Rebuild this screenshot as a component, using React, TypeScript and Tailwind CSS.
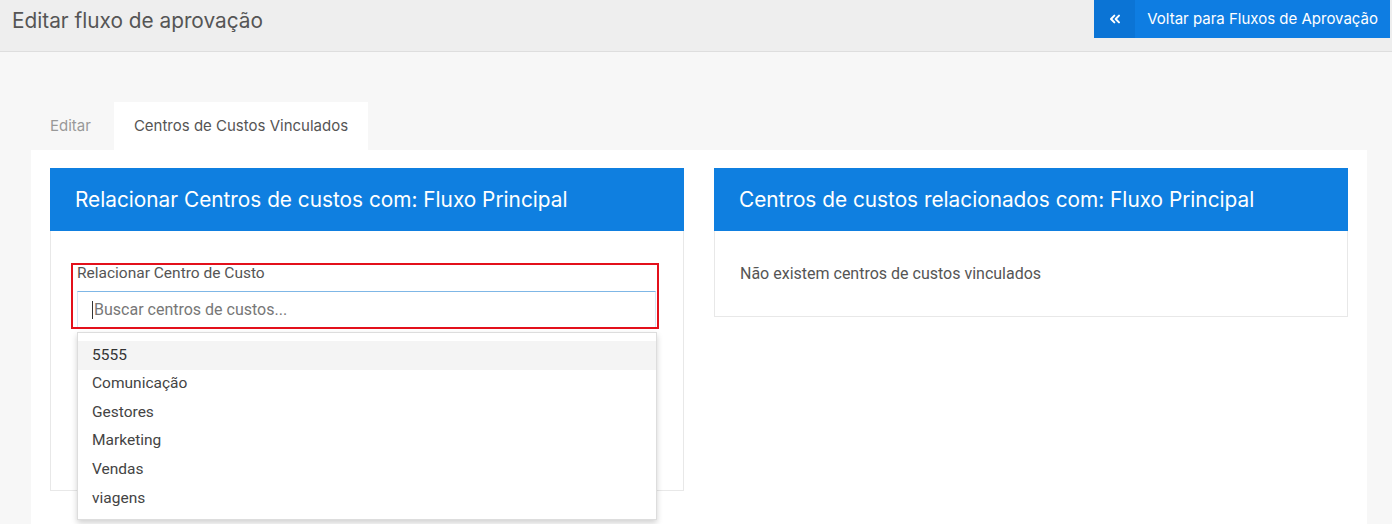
import { ChevronsLeft } from 'lucide-react';

const centros = ['5555', 'Comunicação', 'Gestores', 'Marketing', 'Vendas', 'viagens'];

export default function App() {
  return (
    <div className="min-h-[524px] w-[1392px] bg-[#f7f7f7] font-['Inter',sans-serif] text-[#555]">
      {/* Top bar */}
      <div className="flex h-[52px] items-start justify-between border-b border-[#dedede] bg-[#eeeeee]">
        <h1 className="pl-3 pt-[5px] text-[20.8px] font-normal text-[#555]">Editar fluxo de aprovação</h1>
        <button className="mr-[2px] flex h-[38px] items-stretch bg-[#0e7de2] text-[15px] text-white">
          <span className="flex w-[41px] items-center justify-center bg-[#0b74d5]">
            <ChevronsLeft className="h-4 w-4" strokeWidth={3} />
          </span>
          <span className="flex items-center pl-3 pr-[12px]">Voltar para Fluxos de Aprovação</span>
        </button>
      </div>

      {/* Tabs */}
      <div className="mt-[50px] flex pl-[31px] text-[15px]">
        <div className="flex h-[48px] items-center pl-[19px] pr-[23px] text-[#999]">Editar</div>
        <div className="flex h-[48px] items-center bg-white px-[20px] text-[#555]">Centros de Custos Vinculados</div>
      </div>

      <div className="flex w-[1366px] pl-[31px]">
        <div className="flex flex-1 items-start gap-[30px] bg-white px-[19px] pb-[40px] pt-[18px]">
          {/* Left panel */}
          <div className="w-[634px]">
            <div className="flex h-[63px] items-center bg-[#0f7fe0] pl-[25px] text-[20.8px] text-white">
              Relacionar Centros de custos com: Fluxo Principal
            </div>
            <div className="relative h-[260px] border border-t-0 border-[#e8e8e8] pl-[20px] pt-[32px]">
              <div className="w-[588px] border-2 border-[#e3101b] pl-[4px] pr-[1px] font-['Roboto',sans-serif]">
                <div className="h-[26px] text-[15.5px] leading-[17px] text-[#555]">Relacionar Centro de Custo</div>
                <div className="flex h-[36px] items-center border-x border-t border-x-[#d6e6f5] border-t-[#7fb7e6] pl-[14px] text-[16px] text-[#777]">
                  <span className="mr-[1px] h-[18px] w-px bg-[#333]" />
                  Buscar centros de custos...
                </div>
              </div>
              {/* Dropdown */}
              <div className="absolute left-[26px] top-[101px] z-10 w-[580px] border border-[#ddd] bg-white pb-[6px] pt-[8px] font-['Roboto',sans-serif] text-[15.5px] text-[#444] shadow-[0_3px_6px_rgba(0,0,0,0.18)]">
                {centros.map((c, i) => (
                  <div
                    key={c}
                    className={`flex h-[28.6px] items-center pl-[14px] ${i === 0 ? 'bg-[#f4f4f4] text-[#333]' : ''}`}
                  >
                    {c}
                  </div>
                ))}
              </div>
            </div>
          </div>

          {/* Right panel */}
          <div className="w-[634px]">
            <div className="flex h-[63px] items-center bg-[#0f7fe0] pl-[25px] text-[20.8px] text-white">
              Centros de custos relacionados com: Fluxo Principal
            </div>
            <div className="flex h-[86px] items-center border border-t-0 border-[#e8e8e8] pl-[25px] font-['Roboto',sans-serif] text-[16px] text-[#555]">
              Não existem centros de custos vinculados
            </div>
          </div>
        </div>
      </div>
    </div>
  );
}
